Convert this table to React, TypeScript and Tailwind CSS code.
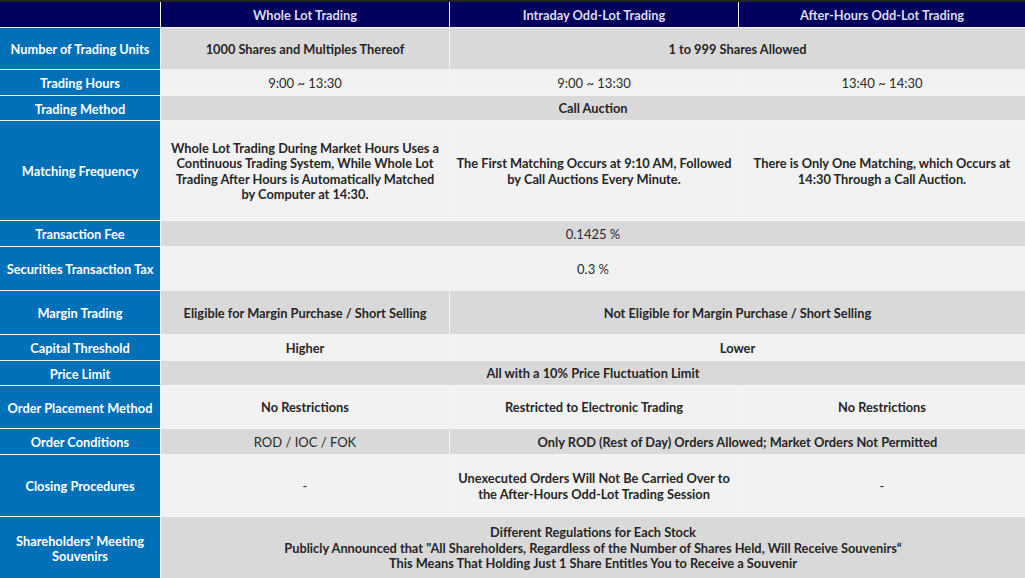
import React from "react";

const font = { fontFamily: 'Lato, "Open Sans", "Liberation Sans", sans-serif' };

function Label({ children }: { children: React.ReactNode }) {
  return (
    <div className="bg-[#0070b8] text-white font-bold text-[12.8px] leading-[15px] flex items-center justify-center text-center px-1 pt-[2px]">
      {children}
    </div>
  );
}

function Cell({
  children,
  dark,
  span,
  regular,
}: {
  children?: React.ReactNode;
  dark?: boolean;
  span?: 2 | 3;
  regular?: boolean;
}) {
  const bg = dark ? "bg-[#d9d9d9]" : "bg-[#f2f2f2]";
  const sp = span === 3 ? "col-span-3" : span === 2 ? "col-span-2" : "";
  const txt = regular ? "font-normal text-[13px] text-[#2a2a2a]" : "font-bold text-[12.8px] text-[#262626]";
  return (
    <div className={`${bg} ${sp} ${txt} leading-[15.5px] flex items-center justify-center text-center px-1 pt-[2px]`}>
      {children}
    </div>
  );
}

function Head({ children }: { children?: React.ReactNode }) {
  return (
    <div className="bg-[#00005c] text-[#dcdcec] font-bold text-[12.8px] flex items-center justify-center pt-[2px]">
      {children}
    </div>
  );
}

export default function App() {
  return (
    <div className="w-[1025px] h-[578px] overflow-hidden bg-[#242424] pt-[2px]" style={font}>
      <div
        className="grid bg-[#f4f4f8] gap-[1px]"
        style={{
          gridTemplateColumns: "160px 288px 288px 1fr",
          gridTemplateRows: "25px 41px 25px 24px 99px 25px 43px 43px 25px 24px 42px 25px 61px 61px",
        }}
      >
        <Head />
        <Head>Whole Lot Trading</Head>
        <Head>Intraday Odd-Lot Trading</Head>
        <Head>After-Hours Odd-Lot Trading</Head>

        <Label>Number of Trading Units</Label>
        <Cell dark>1000 Shares and Multiples Thereof</Cell>
        <Cell dark span={2}>1 to 999 Shares Allowed</Cell>

        <Label>Trading Hours</Label>
        <Cell regular>9:00 ~ 13:30</Cell>
        <Cell regular>9:00 ~ 13:30</Cell>
        <Cell regular>13:40 ~ 14:30</Cell>

        <Label>Trading Method</Label>
        <Cell dark span={3}>Call Auction</Cell>

        <Label>Matching Frequency</Label>
        <Cell>
          <span>
            Whole Lot Trading During Market Hours Uses a<br />
            Continuous Trading System, While Whole Lot<br />
            Trading After Hours is Automatically Matched<br />
            by Computer at 14:30.
          </span>
        </Cell>
        <Cell>
          <span>
            The First Matching Occurs at 9:10 AM, Followed<br />
            by Call Auctions Every Minute.
          </span>
        </Cell>
        <Cell>
          <span>
            There is Only One Matching, which Occurs at<br />
            14:30 Through a Call Auction.
          </span>
        </Cell>

        <Label>Transaction Fee</Label>
        <Cell dark span={3} regular>0.1425 %</Cell>

        <Label>Securities Transaction Tax</Label>
        <Cell span={3} regular>0.3 %</Cell>

        <Label>Margin Trading</Label>
        <Cell dark>Eligible for Margin Purchase / Short Selling</Cell>
        <Cell dark span={2}>Not Eligible for Margin Purchase / Short Selling</Cell>

        <Label>Capital Threshold</Label>
        <Cell>Higher</Cell>
        <Cell span={2}>Lower</Cell>

        <Label>Price Limit</Label>
        <Cell dark span={3}>All with a 10% Price Fluctuation Limit</Cell>

        <Label>Order Placement Method</Label>
        <Cell>No Restrictions</Cell>
        <Cell>Restricted to Electronic Trading</Cell>
        <Cell>No Restrictions</Cell>

        <Label>Order Conditions</Label>
        <Cell dark regular>ROD / IOC / FOK</Cell>
        <Cell dark span={2}>Only ROD (Rest of Day) Orders Allowed; Market Orders Not Permitted</Cell>

        <Label>Closing Procedures</Label>
        <Cell regular>-</Cell>
        <Cell>
          <span>
            Unexecuted Orders Will Not Be Carried Over to<br />
            the After-Hours Odd-Lot Trading Session
          </span>
        </Cell>
        <Cell regular>-</Cell>

        <Label>
          <span>
            Shareholders' Meeting<br />
            Souvenirs
          </span>
        </Label>
        <Cell dark span={3}>
          <span>
            Different Regulations for Each Stock<br />
            Publicly Announced that "All Shareholders, Regardless of the Number of Shares Held, Will Receive Souvenirs“<br />
            This Means That Holding Just 1 Share Entitles You to Receive a Souvenir
          </span>
        </Cell>
      </div>
    </div>
  );
}
